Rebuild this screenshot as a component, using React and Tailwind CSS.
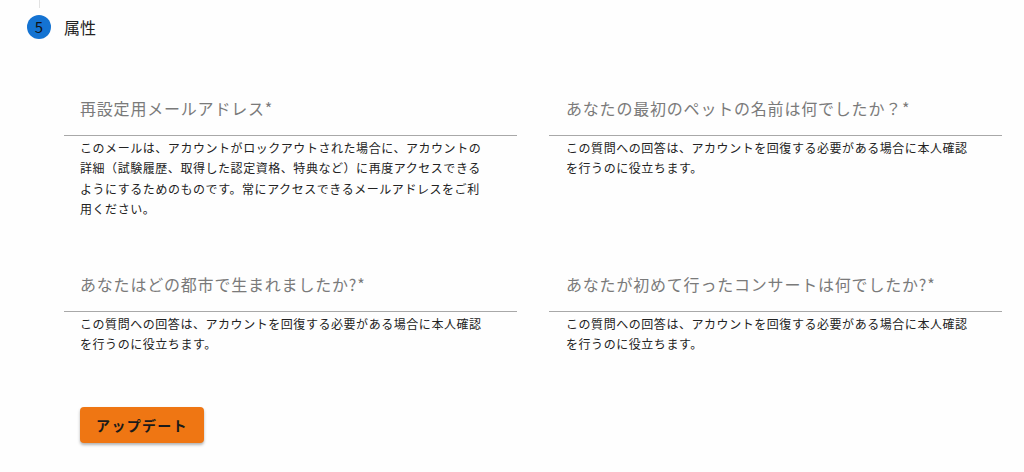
import React from 'react';

const cjk = { fontFamily: '"Noto Sans CJK JP", "Noto Sans", sans-serif' };

const Field = ({ label, help, bodyH, inset = 'pl-4' }) => (
  <div className="w-[453px]">
    <div className={`${inset} h-[76px] border-b border-[#a8a8a8] pt-[36px] text-[16px] leading-[24px] tracking-[0.8px] text-[#7a7a7a]`}>
      {label}
    </div>
    <p className={`${bodyH} ${inset} w-[424px] pt-[2px] text-[12px] leading-[20.4px] tracking-[0.55px] text-[#222]`}>
      {help}
    </p>
  </div>
);

const securityHelp = 'この質問への回答は、アカウントを回復する必要がある場合に本人確認を行うのに役立ちます。';

export default function App() {
  return (
    <div style={cjk} className="relative h-[472px] w-[1024px] overflow-hidden bg-[#fefefe]">
      <div className="ml-[39px] h-[8px] w-px bg-[#e2e2e2]" />
      <div className="ml-[27px] mt-[7px] flex items-center">
        <div className="flex h-6 w-6 items-center justify-center rounded-full bg-[#1473d2] text-[15px] text-[#111]">5</div>
        <div className="ml-[13px] text-[16px] leading-6 text-[#222]">属性</div>
      </div>
      <div className="ml-[64px] mt-[21px] flex gap-[32px]">
        <Field
          label="再設定用メールアドレス*"
          bodyH="h-[100px]"
          help="このメールは、アカウントがロックアウトされた場合に、アカウントの詳細（試験履歴、取得した認定資格、特典など）に再度アクセスできるようにするためのものです。常にアクセスできるメールアドレスをご利用ください。"
        />
        <Field label="あなたの最初のペットの名前は何でしたか？*" inset="pl-[17px]" bodyH="h-[100px]" help={securityHelp} />
      </div>
      <div className="ml-[64px] flex gap-[32px]">
        <Field label="あなたはどの都市で生まれましたか?*" bodyH="h-[95px]" help={securityHelp} />
        <Field label="あなたが初めて行ったコンサートは何でしたか?*" inset="pl-[17px]" bodyH="h-[95px]" help={securityHelp} />
      </div>
      <button className="ml-[80px] flex h-[36px] w-[124px] items-center justify-center rounded-[4px] bg-[#ef7613] text-[14px] font-bold tracking-[1.3px] text-[#1a1a1a] shadow-[0_2px_3px_rgba(0,0,0,0.3)]">
        アップデート
      </button>
    </div>
  );
}
